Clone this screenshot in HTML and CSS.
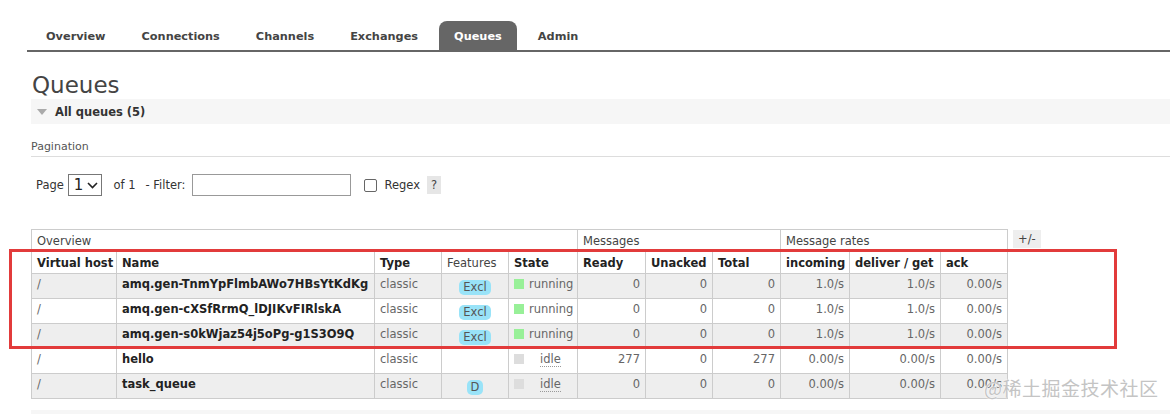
FILE: index.html
```html
<!DOCTYPE html>
<html lang="en">
    <head>
        <meta charset="UTF-8">
        <title>RabbitMQ Management - Queues</title>
        <link rel="stylesheet" href="styles.css">
    </head>
    <body>

        <!-- Top navigation -->
        <ul class="tabs">
            <li class="tab">Overview</li>
            <li class="tab">Connections</li>
            <li class="tab">Channels</li>
            <li class="tab">Exchanges</li>
            <li class="tab active">Queues</li>
            <li class="tab">Admin</li>
        </ul>

        <div class="main">
            <h1>Queues</h1>

            <div class="section-head">
                <span class="arrow"></span>
                <span>All queues (5)</span>
            </div>

            <div class="section-body">
                <h3 class="pagination-title">Pagination</h3>

                <div class="filter-row">
                    <span>Page</span>
                    <span class="select-box">1 <svg width="11" height="7" viewBox="0 0 11 7"><path d="M1 1 L5.5 5.5 L10 1" fill="none" stroke="#222" stroke-width="1.6"/></svg></span>
                    <span class="of">of 1</span>
                    <span>- Filter:</span>
                    <span class="filter-input"></span>
                    <span class="checkbox"></span>
                    <span>Regex</span>
                    <span class="help">?</span>
                </div>

                <div class="table-wrap">
                    <table class="list">
                        <colgroup>
                            <col class="c-vhost"><col class="c-name"><col class="c-type"><col class="c-feat"><col class="c-state">
                            <col class="c-ready"><col class="c-unacked"><col class="c-total">
                            <col class="c-in"><col class="c-deliver"><col class="c-ack">
                        </colgroup>
                        <thead>
                            <tr class="group-row">
                                <th colspan="5">Overview</th>
                                <th colspan="3">Messages</th>
                                <th colspan="3">Message rates</th>
                            </tr>
                            <tr class="head-row">
                                <th>Virtual host</th>
                                <th>Name</th>
                                <th>Type</th>
                                <th class="plain">Features</th>
                                <th>State</th>
                                <th>Ready</th>
                                <th>Unacked</th>
                                <th>Total</th>
                                <th>incoming</th>
                                <th>deliver / get</th>
                                <th>ack</th>
                            </tr>
                        </thead>
                        <tbody id="rows"></tbody>
                    </table>
                    <span class="toggle">+/-</span>
                </div>
            </div>

            <div class="section-head bottom"></div>
        </div>

        <!-- annotation overlay from the screenshot -->
        <div class="highlight"></div>
        <div class="watermark">@稀土掘金技术社区</div>

        <script>
            const queues = [
                {vhost: '/', name: 'amq.gen-TnmYpFlmbAWo7HBsYtKdKg', type: 'classic', feature: 'Excl', state: 'running', ready: 0, unacked: 0, total: 0, incoming: '1.0/s', deliver: '1.0/s', ack: '0.00/s'},
                {vhost: '/', name: 'amq.gen-cXSfRrmQ_lDJIKvFIRlskA', type: 'classic', feature: 'Excl', state: 'running', ready: 0, unacked: 0, total: 0, incoming: '1.0/s', deliver: '1.0/s', ack: '0.00/s'},
                {vhost: '/', name: 'amq.gen-s0kWjaz54j5oPg-g1S3O9Q', type: 'classic', feature: 'Excl', state: 'running', ready: 0, unacked: 0, total: 0, incoming: '1.0/s', deliver: '1.0/s', ack: '0.00/s'},
                {vhost: '/', name: 'hello', type: 'classic', feature: '', state: 'idle', ready: 277, unacked: 0, total: 277, incoming: '0.00/s', deliver: '0.00/s', ack: '0.00/s'},
                {vhost: '/', name: 'task_queue', type: 'classic', feature: 'D', state: 'idle', ready: 0, unacked: 0, total: 0, incoming: '0.00/s', deliver: '0.00/s', ack: '0.00/s'},
            ];

            function displayQueues() {
                const body = document.getElementById('rows');
                queues.forEach((q, i) => {
                    const tr = document.createElement('tr');
                    tr.className = i % 2 === 0 ? 'alt1' : 'alt2';
                    const feature = q.feature ? '<span class="badge">' + q.feature + '</span>' : '';
                    tr.innerHTML =
                        '<td>' + q.vhost + '</td>' +
                        '<td class="name">' + q.name + '</td>' +
                        '<td>' + q.type + '</td>' +
                        '<td class="c">' + feature + '</td>' +
                        '<td><span class="status ' + q.state + '"></span><span class="state-' + q.state + '">' + q.state + '</span></td>' +
                        '<td class="r">' + q.ready + '</td>' +
                        '<td class="r">' + q.unacked + '</td>' +
                        '<td class="r">' + q.total + '</td>' +
                        '<td class="r">' + q.incoming + '</td>' +
                        '<td class="r">' + q.deliver + '</td>' +
                        '<td class="r">' + q.ack + '</td>';
                    body.appendChild(tr);
                });
            }

            displayQueues();
        </script>

    </body>
</html>
```

FILE: styles.css
```css
/* CSS */
body {
    margin: 0;
    background-color: #fff;
    color: #484848;
    font-family: "DejaVu Sans", Verdana, sans-serif;
    font-size: 11.5px;
    overflow: hidden;
}
.tabs {
    list-style: none;
    display: flex;
    margin: 21px 0 0 27px;
    padding: 0 0 0 4px;
    border-bottom: 2px solid #666;
}
.tab {
    padding: 9px 15px 7px;
    margin-right: 6px;
    font-size: 11.3px;
    font-weight: bold;
    color: #444;
    border-radius: 8px 8px 0 0;
}
.tab.active {
    background-color: #666;
    color: #fff;
}
.main {
    padding-left: 31px;
}
h1 {
    font-size: 23px;
    font-weight: normal;
    color: #444;
    margin: 19px 0 0 1px;
    line-height: 28px;
}
.section-head {
    display: flex;
    align-items: center;
    height: 25px;
    background-color: #f6f6f6;
    font-weight: bold;
    color: #333;
}
.section-head.bottom {
    margin-top: 11px;
}
.arrow {
    width: 0;
    height: 0;
    margin: 0 8px 0 6px;
    border-left: 5px solid transparent;
    border-right: 5px solid transparent;
    border-top: 6px solid #aaa;
}
.pagination-title {
    font-size: 11px;
    font-weight: normal;
    color: #555;
    margin: 16px 0 0;
    padding-bottom: 3px;
    border-bottom: 1px solid #ddd;
}
.filter-row {
    display: flex;
    align-items: center;
    margin: 17px 0 0 5px;
    color: #333;
}
.select-box {
    display: flex;
    align-items: center;
    gap: 4px;
    height: 20px;
    margin-left: 4px;
    padding: 0 3px 0 5px;
    border: 1px solid #777;
    font-size: 15px;
    color: #222;
}
.of {
    margin: 0 10px 0 11px;
}
.filter-input {
    width: 157px;
    height: 20px;
    margin-left: 7px;
    border: 1px solid #999;
}
.checkbox {
    width: 11px;
    height: 11px;
    margin: 0 7px 0 13px;
    border: 1px solid #666;
    border-radius: 2px;
}
.help {
    margin-left: 7px;
    padding: 2px 4px;
    background-color: #e6e6e6;
    color: #444;
}
.table-wrap {
    display: flex;
    align-items: flex-start;
    gap: 5px;
    margin-top: 33px;
}
.list {
    table-layout: fixed;
    width: 977px;
    border-collapse: collapse;
}
.c-vhost { width: 85px; }
.c-name { width: 258px; }
.c-type { width: 67px; }
.c-feat { width: 67px; }
.c-state { width: 69px; }
.c-ready { width: 68px; }
.c-unacked { width: 67px; }
.c-total { width: 68px; }
.c-in { width: 69px; }
.c-deliver { width: 91px; }
.c-ack { width: 67px; }
.list th,
.list td {
    border: 1px solid #ccc;
    text-align: left;
    white-space: nowrap;
    overflow: hidden;
}
.list th {
    line-height: 14px;
    padding: 4px 5px 3px;
}
.group-row th {
    font-weight: normal;
    color: #444;
}
.head-row th {
    color: #222;
}
.head-row th.plain {
    font-weight: normal;
    color: #444;
}
.list td {
    color: #666;
    vertical-align: top;
    line-height: 15px;
    padding: 3px 5px 6px;
}
.list td.name {
    font-weight: bold;
    color: #222;
}
.list td.r {
    text-align: right;
}
.list td.c {
    text-align: center;
}
.alt1 td {
    background-color: #eee;
}
.alt2 td {
    background-color: #fff;
}
.badge {
    position: relative;
    top: 3px;
    display: inline-block;
    vertical-align: top;
    height: 15px;
    line-height: 15px;
    padding: 0 4px;
    background-color: #99e3f8;
    border-radius: 5px;
    color: #555;
}
.status {
    display: inline-block;
    width: 10px;
    height: 10px;
    margin-right: 5px;
    vertical-align: -1px;
}
.status.running {
    background-color: #98f098;
}
.status.idle {
    background-color: #ddd;
}
.state-idle {
    margin-left: 11px;
    border-bottom: 1px dotted #999;
}
.toggle {
    padding: 2px 5px;
    background-color: #eee;
    color: #444;
    margin-top: 1px;
}
.highlight {
    position: absolute;
    left: 9px;
    top: 249px;
    width: 1102px;
    height: 94px;
    border: 3px solid #e23b3b;
}
.watermark {
    position: absolute;
    left: 984px;
    top: 374px;
    font-family: "Noto Sans CJK SC", sans-serif;
    font-size: 19px;
    color: #c4c4c4;
    text-shadow: 0 0 2px #fff, 0 0 1px #fff;
    letter-spacing: 0.5px;
}
```
